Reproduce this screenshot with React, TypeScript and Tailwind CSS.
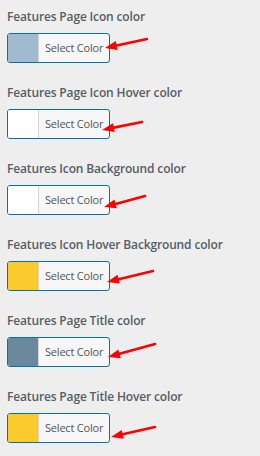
type Item = {
  label: string
  swatch: string
  tip: [number, number]
  tail: [number, number]
}

const items: Item[] = [
  { label: "Features Page Icon color", swatch: "#a0bad0", tip: [105, 15], tail: [147, 6] },
  { label: "Features Page Icon Hover color", swatch: "#ffffff", tip: [102, 21], tail: [142, 13] },
  { label: "Features Icon Background color", swatch: "#ffffff", tip: [104, 22], tail: [145, 11] },
  { label: "Features Icon Hover Background color", swatch: "#fdca2e", tip: [107, 21], tail: [153, 10] },
  { label: "Features Page Title color", swatch: "#6b889f", tip: [108, 20], tail: [155, 7] },
  { label: "Features Page Title Hover color", swatch: "#fdca2e", tip: [111, 24], tail: [155, 14] },
]

function Arrow({ tip, tail }: { tip: [number, number]; tail: [number, number] }) {
  const dx = tail[0] - tip[0]
  const dy = tail[1] - tip[1]
  const len = Math.hypot(dx, dy)
  const ux = dx / len
  const uy = dy / len
  const headLen = 12
  const headW = 4.5
  const bx = tip[0] + ux * headLen
  const by = tip[1] + uy * headLen
  const p1 = `${bx - uy * headW},${by + ux * headW}`
  const p2 = `${bx + uy * headW},${by - ux * headW}`
  return (
    <svg className="absolute left-0 top-0 pointer-events-none" width="260" height="40">
      <line x1={tail[0]} y1={tail[1]} x2={bx} y2={by} stroke="#f00" strokeWidth="2.6" strokeLinecap="round" />
      <polygon points={`${tip[0]},${tip[1]} ${p1} ${p2}`} fill="#f00" />
    </svg>
  )
}

export default function App() {
  return (
    <div
      className="w-[260px] h-[456px] bg-[#eeeeee] pt-[8px] px-[7px] flex flex-col gap-[21px] overflow-hidden"
      style={{ fontFamily: '"Open Sans", "Noto Sans", sans-serif' }}
    >
      {items.map((it) => (
        <div key={it.label} className="flex flex-col gap-[7px]">
          <div className="text-[12px] leading-[18px] font-semibold text-[#555d66] whitespace-nowrap tracking-[-0.15px]">
            {it.label}
          </div>
          <div className="relative h-[30px]">
            <div className="flex w-[103px] h-[30px] border border-[#0073aa] rounded-[3px] overflow-hidden bg-[#f7f7f7]">
              <div className="w-[31px] h-full border-r border-[#d5d5d5]" style={{ backgroundColor: it.swatch }} />
              <div className="flex-1 flex items-center pl-[6px] text-[11px] tracking-[-0.2px] text-[#555555]">Select Color</div>
            </div>
            <div className="absolute -left-[7px] top-0">
              <Arrow tip={it.tip} tail={it.tail} />
            </div>
          </div>
        </div>
      ))}
    </div>
  )
}
